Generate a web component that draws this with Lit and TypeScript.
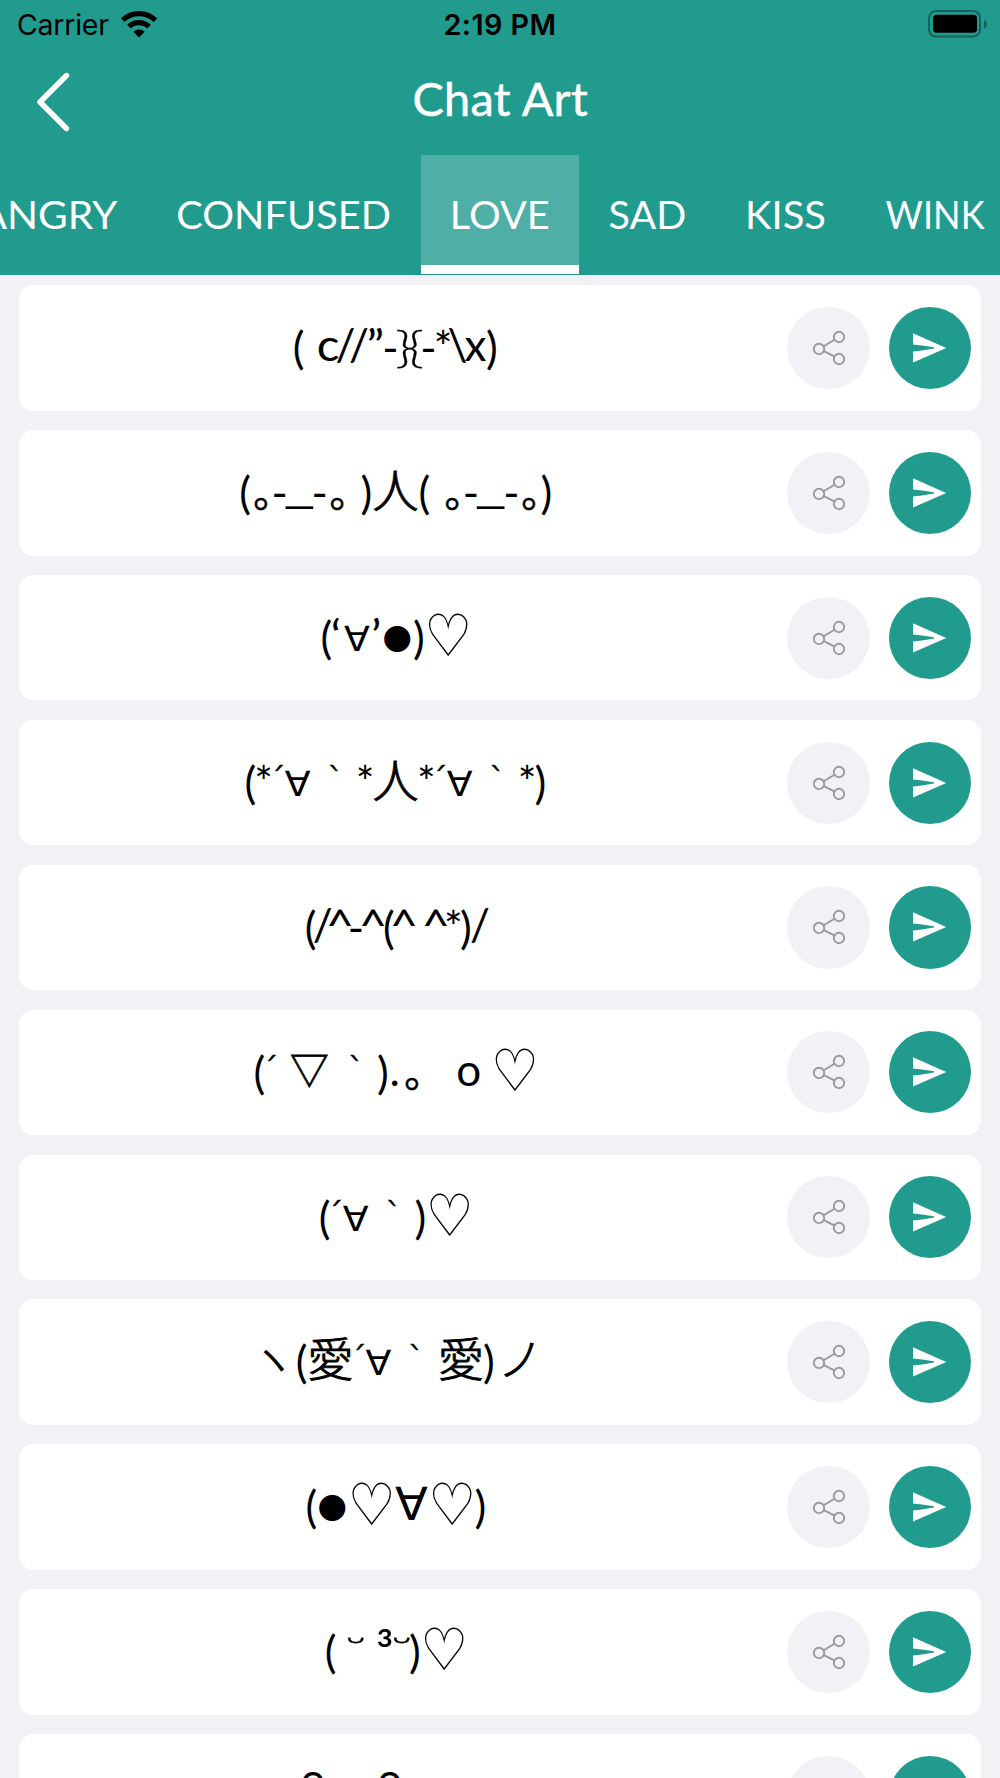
import { LitElement, html, svg, css } from "lit";
import { customElement, property } from "lit/decorators.js";

/** One glyph of an emoticon: character, centre on the x axis, optional style. */
type Glyph = [string, number, string?];

interface Tab {
  label: string;
  width: number;
  stretch: number;
  active?: boolean;
}

const TABS: Tab[] = [
  { label: "ANGRY", width: 194, stretch: 1.07 },
  { label: "CONFUSED", width: 275.5, stretch: 1.046 },
  { label: "LOVE", width: 158, stretch: 1.045, active: true },
  { label: "SAD", width: 137, stretch: 1.04 },
  { label: "KISS", width: 140, stretch: 1.05 },
  { label: "WINK", width: 158, stretch: 0.95 },
];

/** Baseline, horizontal and vertical stretch of each kind of glyph. */
const KINDS: Record<string, [number, number, number]> = {
  latin: [76.3, 1, 1],
  round: [76.3, 1.08, 1],
  paren: [78.7, 1, 1],
  brace: [78.4, 1.3, 1],
  hyphen: [78.6, 1, 1],
  star: [78, 1, 1],
  caret: [77.3, 1.12, 1],
  quote: [77.4, 1.1, 1],
  kanji: [76.8, 1, 1],
  stop: [77.4, 0.86, 0.86],
  low: [72.8, 1.6, 1],
  turned: [76.4, 1.09, 1],
  turnedBig: [76.2, 1, 0.95],
  dot: [74.6, 1, 1],
  heart: [81, 1.17, 1.27],
  accent: [75.8, 1.15, 1],
  tri: [74, 0.84, 0.84],
  kana: [76.6, 1, 1],
  breve: [80, 1.45, 1],
  sup: [81, 1.2, 1.13],
  arc: [61.2, 1, 1],
};

const AUTO: Record<string, string> = {
  "(": "paren", ")": "paren", "{": "brace", "}": "brace",
  "-": "hyphen", "*": "star", "^": "caret", c: "round",
  "‘": "quote", "’": "quote", "”": "quote",
};

const ROWS: Glyph[][] = [
  [["(", 299], [" ", 312], ["c", 328.3], ["/", 345.7], ["/", 359.3], ["”", 375.7], ["-", 390.7], ["}", 404], ["{", 416], ["-", 428.7], ["*", 443.3], ["\\", 457.7], ["x", 475.7], [")", 492.3]],
  [["(", 245.3], ["｡", 263.7, "stop"], ["-", 280], ["_", 299.7, "low"], ["-", 320], ["｡", 340, "stop"], [" ", 355], [")", 366.7], ["人", 395.7, "kanji"], ["(", 424.7], [" ", 440], ["｡", 455, "stop"], ["-", 471.3], ["_", 491, "low"], ["-", 511.7], ["｡", 531.7, "stop"], [")", 546.7]],
  [["(", 326.7], ["‘", 336.3], ["∀", 357.3, "turned"], ["’", 376.4], ["●", 397.6, "dot"], [")", 419.3], ["♡", 448.5, "heart"]],
  [["(", 250.7], ["*", 264], ["´", 277.7, "accent"], ["∀", 298, "turned"], [" ", 316], ["`", 335.3, "accent"], [" ", 350], ["*", 365.3], ["人", 395.7, "kanji"], ["*", 426.7], ["´", 439.7, "accent"], ["∀", 460, "turned"], [" ", 478], ["`", 497.3, "accent"], [" ", 512], ["*", 527.3], [")", 540.7]],
  [["(", 311], ["/", 323], ["^", 340.3], ["-", 356.3], ["^", 373.3], ["(", 389.3], ["^", 404.3], [" ", 420], ["^", 436], ["*", 453.7], [")", 466.3], ["/", 480.3]],
  [["(", 259.7], ["´", 270.3, "accent"], [" ", 283], ["▽", 309.7, "tri"], [" ", 335], ["`", 356, "accent"], [" ", 370], [")", 383.3], [".", 395], ["｡", 414.7, "stop"], [" ", 440], ["o", 469], [" ", 490], ["♡", 515.2, "heart"]],
  [["(", 325], ["´", 335.3, "accent"], ["∀", 356, "turned"], [" ", 374], ["`", 393.4, "accent"], [" ", 406], [")", 420.7], ["♡", 450, "heart"]],
  [["ヽ", 273.2, "kana"], ["(", 302], ["愛", 330.7, "kanji"], ["´", 358.7, "accent"], ["∀", 378.7, "turned"], [" ", 396], ["`", 416, "accent"], [" ", 430], ["愛", 461.2, "kanji"], [")", 489.3], ["ノ", 520.5, "kana"]],
  [["(", 311.7], ["●", 332.6, "dot"], ["♡", 372, "heart"], ["∀", 411.7, "turnedBig"], ["♡", 452.5, "heart"], [")", 480.7]],
  [["(", 331], [" ", 343], ["˘", 356, "breve"], [" ", 370], ["³", 385, "sup"], ["˘", 402, "breve"], [")", 415.3], ["♡", 444.5, "heart"]],
  [["o", 313.3, "arc"], [" ", 350], ["o", 390, "arc"]],
];

@customElement("art-row")
class ArtRow extends LitElement {
  @property({ attribute: false }) glyphs: Glyph[] = [];

  static styles = css`
    :host {
      display: flex;
      flex: none;
      box-sizing: border-box;
      height: 125.6px;
      padding-right: 9.7px;
      align-items: center;
      background: #fff;
      border-radius: 14.5px;
    }
    .art {
      flex: none;
      width: 753.6px;
      height: 125.6px;
      margin-right: 14.6px;
    }
    text {
      text-anchor: middle;
      fill: #000;
      font-family: Lato, "Liberation Sans", sans-serif;
      font-size: 44px;
    }
    .stop, .kanji, .kana, .tri, .dot {
      font-family: "Noto Sans CJK JP", sans-serif;
      font-size: 46px;
    }
    .kanji, .kana { font-weight: 300; stroke: #000; stroke-width: 0.9; }
    .stop { stroke: #000; stroke-width: 0.6; }
    .dot { font-size: 29px; }
    .tri { stroke: #000; stroke-width: 0.9; }
    .accent, .breve, .brace { font-weight: 300; stroke: #000; stroke-width: 0.3; }
    .turned { font-family: "DejaVu Sans", sans-serif; font-size: 34.7px; }
    .turnedBig { font-family: "DejaVu Sans", sans-serif; font-size: 48px; }
    .heart { font-family: "DejaVu Sans", sans-serif; font-size: 46px; }
    .button {
      display: flex;
      flex: none;
      width: 82.1px;
      height: 82.1px;
      border: 0;
      padding: 0;
      border-radius: 50%;
      align-items: center;
      justify-content: center;
    }
    .share { background: #f2f1f6; margin-right: 19.3px; }
    .send { background: #229b8f; }
    .icon { width: 40px; height: 40px; display: block; }
  `;

  render() {
    return html`
      <svg class="art" viewBox="19.3 0 753.6 125.6">${this.glyphs.map(([ch, x, given]) => {
        const kind = given ?? AUTO[ch] ?? "latin";
        const [y, sx, sy] = KINDS[kind];
        return svg`<text class=${kind} transform="translate(${x} ${y}) scale(${sx} ${sy})">${ch}</text>`;
      })}</svg>
      <button class="button share" aria-label="Share">
        <svg class="icon" viewBox="0 0 40 40" fill="none" stroke="#999" stroke-width="1.9">
          <circle cx="10" cy="20.9" r="5.2" />
          <circle cx="30" cy="9" r="5.2" />
          <circle cx="30" cy="31" r="5.2" />
          <path d="M14.6 18.2 25.5 11.8M14.8 23.2 25.3 28.4" />
        </svg>
      </button>
      <button class="button send" aria-label="Send">
        <svg class="icon" viewBox="0 0 40 40" fill="#fff">
          <path d="M3 5.2 36.2 19.9 3 34.5V23.4L12 22.6 24 20.4V19.2L12 17.6 3 16.6Z" />
        </svg>
      </button>
    `;
  }
}

@customElement("app-root")
class AppRoot extends LitElement {
  static styles = css`
    :host {
      display: block;
      width: 1000px;
      height: 1778px;
      overflow: hidden;
      background: #f2f1f6;
    }
    .page { display: flex; flex-direction: column; height: 1778px; overflow: hidden; }
    .header { flex: none; background: #229b8f; height: 275px; overflow: hidden; }
    .status {
      display: grid;
      grid-template-columns: 1fr auto 1fr;
      align-items: center;
      height: 48.3px;
      padding: 0 12px 0 17px;
      box-sizing: border-box;
      color: #000;
      font: 400 28.5px/40px Inter, "Liberation Sans", sans-serif;
    }
    .carrier { display: flex; align-items: center; gap: 11.5px; }
    .carrier-name { letter-spacing: -0.25px; padding-top: 2px; }
    .time { font-weight: 600; font-size: 28.8px; letter-spacing: 0.4px; padding-top: 2px; margin-left: -5px; }
    .wifi { width: 38px; height: 28px; }
    .battery { width: 60px; height: 28px; justify-self: end; }
    .nav {
      display: grid;
      grid-template-columns: 1fr auto 1fr;
      align-items: center;
      height: 106.5px;
    }
    .back { width: 36px; height: 62px; margin-left: 35px; }
    .title {
      color: #fff;
      font: 400 45.5px/60px Lato, "Liberation Sans", sans-serif;
      letter-spacing: 0.3px;
      transform: scaleX(1.03);
      -webkit-text-stroke: 0.5px #fff;
      margin: 0;
      padding-bottom: 6px;
    }
    .tabs { display: flex; height: 120.2px; margin-left: -48.5px; }
    .tab {
      flex: none;
      box-sizing: border-box;
      text-align: center;
      color: #fff;
      font: 400 38px/119px Lato, "Liberation Sans", sans-serif;
      height: 119.2px;
    }
    .label { display: inline-block; }
    .active { background: #4fafa6; border-bottom: 9.5px solid #fff; }
    .list { display: flex; flex-direction: column; gap: 19.33px; padding: 10px 19.3px 0; }
  `;

  render() {
    return html`
      <div class="page">
        <header class="header">
          <div class="status">
            <div class="carrier">
              <span class="carrier-name">Carrier</span>
              <svg class="wifi" viewBox="0 0 38 28">
                <g fill="none" stroke="#000" stroke-width="5.2">
                  <path d="M2.6 10.2A23.5 23.5 0 0 1 35.4 10.2" />
                  <path d="M8.9 16.7A14.6 14.6 0 0 1 29.1 16.7" />
                </g>
                <path d="M19 27.5 13.4 21.7A8 8 0 0 1 24.6 21.7Z" />
              </svg>
            </div>
            <span class="time">2:19 PM</span>
            <svg class="battery" viewBox="0 0 60 28">
              <rect x="1" y="1" width="51" height="25.5" rx="7" fill="none" stroke="#166359" stroke-width="2" />
              <rect x="5" y="4.8" width="44" height="18" rx="3.5" />
              <path d="M56 9.5c4 2 4 7.500 0 9.500z" fill="#166359" />
            </svg>
          </div>
          <div class="nav">
            <svg class="back" viewBox="0 0 36 62">
              <path d="M31.500 4.500 5 31 31.500 57.500" fill="none" stroke="#fff" stroke-width="5.400" stroke-linecap="round" stroke-linejoin="round" />
            </svg>
            <h1 class="title">Chat Art</h1>
          </div>
          <nav class="tabs">
            ${TABS.map(
              (t) => html`<div class="tab ${t.active ? "active" : ""}" style="width:${t.width}px"
                ><span class="label" style="transform:scaleX(${t.stretch})">${t.label}</span></div>`
            )}
          </nav>
        </header>
        <main class="list">
          ${ROWS.map((r) => html`<art-row .glyphs=${r}></art-row>`)}
        </main>
      </div>
    `;
  }
}
